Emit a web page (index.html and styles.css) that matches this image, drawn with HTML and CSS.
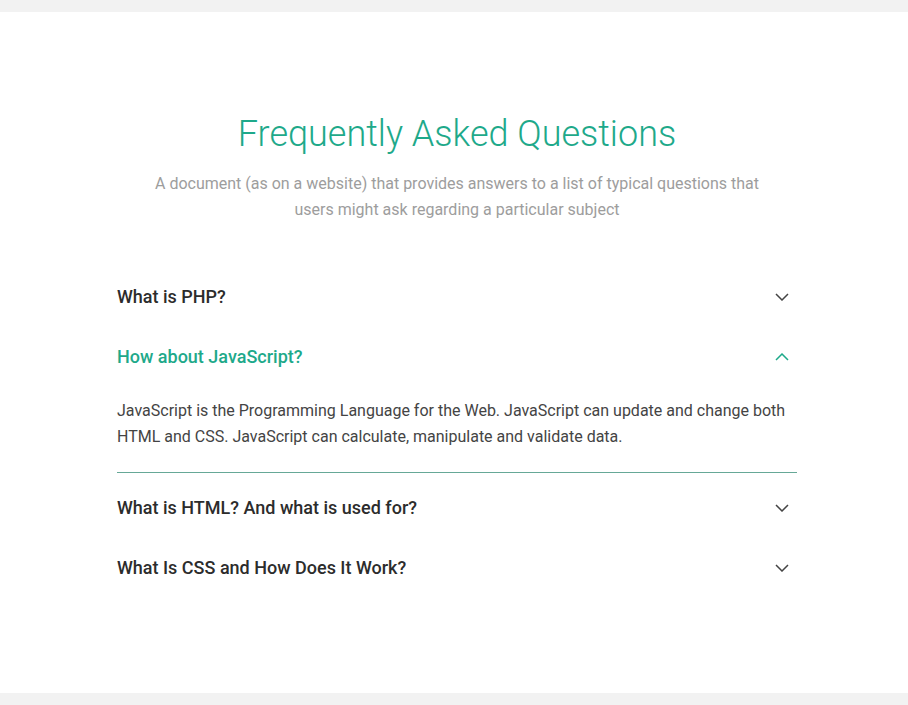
FILE: index.html
```html
<!DOCTYPE html>
<html lang="en">
<head>
<meta charset="utf-8">
<title>FAQ</title>
<link rel="stylesheet" href="styles.css">
</head>
<body>
<section class="faq">
  <h1 class="faq-title">Frequently Asked Questions</h1>
  <p class="faq-sub">A document (as on a website) that provides answers to a list of typical questions that users might ask regarding a particular subject</p>
  <div class="faq-list">
    <div class="item">
      <div class="q"><span>What is PHP?</span>
        <svg class="chev" width="14" height="8" viewBox="0 0 14 8"><polyline points="1,1 7,7 13,1" fill="none" stroke="currentColor" stroke-width="1.5"/></svg>
      </div>
    </div>
    <div class="item open">
      <div class="q"><span>How about JavaScript?</span>
        <svg class="chev" width="14" height="8" viewBox="0 0 14 8"><polyline points="1,7 7,1 13,7" fill="none" stroke="currentColor" stroke-width="1.5"/></svg>
      </div>
      <div class="a">JavaScript is the Programming Language for the Web. JavaScript can update and change both HTML and CSS. JavaScript can calculate, manipulate and validate data.</div>
    </div>
    <div class="item">
      <div class="q"><span>What is HTML? And what is used for?</span>
        <svg class="chev" width="14" height="8" viewBox="0 0 14 8"><polyline points="1,1 7,7 13,1" fill="none" stroke="currentColor" stroke-width="1.5"/></svg>
      </div>
    </div>
    <div class="item">
      <div class="q"><span>What Is CSS and How Does It Work?</span>
        <svg class="chev" width="14" height="8" viewBox="0 0 14 8"><polyline points="1,1 7,7 13,1" fill="none" stroke="currentColor" stroke-width="1.5"/></svg>
      </div>
    </div>
  </div>
</section>
</body>
</html>
```
FILE: styles.css
```css
html, body {
  margin: 0;
  padding: 0;
}
body {
  background: #f2f2f2;
  font-family: Roboto, "Liberation Sans", sans-serif;
  padding: 12px 0 13px;
}
.faq {
  background: #fff;
  padding: 99px 111px 95px 117px;
}
.faq-title {
  margin: 0;
  font-size: 36px;
  font-weight: 300;
  line-height: 46px;
  color: #1ea98a;
  text-align: center;
}
.faq-sub {
  margin: 14px auto 0;
  max-width: 610px;
  font-size: 16px;
  line-height: 26px;
  color: #9d9d9d;
  text-align: center;
}
.faq-list {
  margin-top: 44px;
}
.q {
  display: flex;
  align-items: center;
  justify-content: space-between;
  padding: 18px 0;
  font-size: 18px;
  font-weight: 500;
  line-height: 24px;
  color: #2c2c2c;
}
.chev {
  color: #444;
  margin-right: 8px;
}
.open .q, .open .chev {
  color: #1ea98a;
}
.a {
  padding: 11px 0 22px;
  border-bottom: 1px solid #66a897;
  margin-bottom: 5px;
  font-size: 16px;
  line-height: 26px;
  color: #444;
}
```
